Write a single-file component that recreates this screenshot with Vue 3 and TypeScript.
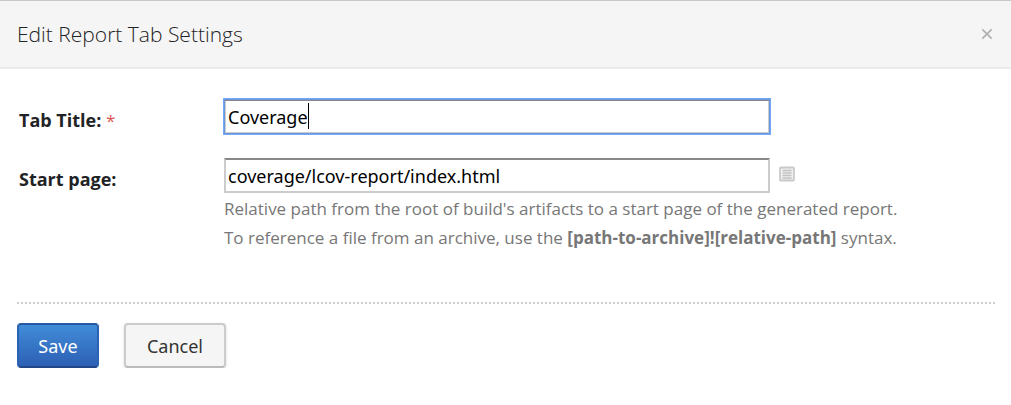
<script setup lang="ts">
import { ref } from 'vue'

const tabTitle = ref('Coverage')
const startPage = ref('coverage/lcov-report/index.html')
</script>

<template>
  <form class="dialog" @submit.prevent>
    <header class="header">
      <h1 class="title">Edit Report Tab Settings</h1>
      <button class="close" type="button" aria-label="Close">
        <svg width="12" height="12" viewBox="0 0 12 12">
          <path d="M1.3 1.3 10.7 10.7M10.7 1.3 1.3 10.7" fill="none" stroke="#b0b0b0" stroke-width="1.7" />
        </svg>
      </button>
    </header>

    <div class="fields">
      <label class="label" for="tab-title">Tab Title: <span class="required">*</span></label>
      <div class="control">
        <div class="box">
          <input id="tab-title" v-model="tabTitle" class="input active" type="text" />
          <i class="caret"></i>
        </div>
      </div>

      <label class="label" for="start-page">Start page:</label>
      <div class="control">
        <div class="row">
          <div class="box">
            <input id="start-page" v-model="startPage" class="input" type="text" />
          </div>
          <button class="picker" type="button" aria-label="Browse artifacts">
            <svg width="16" height="16" viewBox="0 0 16 16">
              <rect x="1" y="1.5" width="14" height="13" rx="1" fill="#efefef" stroke="#cacaca" stroke-width="1.8" />
              <path d="M3.5 4.5h9M3.5 7h9M3.5 9.5h9M3.5 12h9" stroke="#c2c2c2" stroke-width="1.3" />
            </svg>
          </button>
        </div>
        <p class="help">
          Relative path from the root of build's artifacts to a start page of the generated report.<br />
          To reference a file from an archive, use the <b>[path-to-archive]![relative-path]</b> syntax.
        </p>
      </div>
    </div>

    <footer class="footer">
      <button class="button save" type="submit">Save</button>
      <button class="button cancel" type="button">Cancel</button>
    </footer>
  </form>
</template>

<style>
body {
  margin: 0;
  background: #fff;
}
</style>

<style scoped>
.dialog {
  border-top: 1px solid #c8c8c8;
  color: #1f2326;
  font-family: "Open Sans", "Noto Sans", sans-serif;
  font-size: 18px;
}
.dialog * {
  box-sizing: border-box;
}
.header {
  display: flex;
  align-items: center;
  justify-content: space-between;
  height: 68px;
  padding: 0 18px 0 17px;
  border-bottom: 2px solid #ebebeb;
  background: #f5f5f5;
}
.title {
  margin: 0;
  font-size: 21px;
  font-weight: 300;
  line-height: 28px;
}
.close,
.picker {
  display: flex;
  padding: 0;
  border: 0;
  background: none;
}
.picker {
  margin-bottom: 3px;
}
.fields {
  display: grid;
  grid-template-columns: 205px minmax(0, 1fr);
  row-gap: 24px;
  padding: 30px 18px 0 19px;
}
.label {
  padding-top: 8px;
  font-weight: 700;
  line-height: 26px;
}
.required {
  color: #d9534f;
  font-size: 17px;
  font-weight: 400;
}
.row {
  display: flex;
  align-items: center;
  gap: 9px;
}
.box {
  position: relative;
  width: 100%;
  max-width: 546px;
}
.input {
  display: block;
  width: 100%;
  height: 35px;
  padding: 0 2px;
  border: 2px solid #ccc;
  border-top-color: #888;
  border-radius: 0;
  outline: none;
  background: #fff;
  color: #000;
  font-family: "Noto Sans", "Open Sans", sans-serif;
  font-size: 18px;
  line-height: 26px;
}
.active {
  border: 1px solid #6b97dc;
  box-shadow: 0 0 0 1px #74a6fa, inset 0 1px #888, inset 0 -1px #ccc, inset -1px 0 #ccc, inset 1px 0 #ccc;
  padding: 0 3px;
}
.caret {
  position: absolute;
  top: 4px;
  left: 84px;
  width: 1px;
  height: 26px;
  background: #000;
}
.help {
  margin: 1px 0 0;
  color: #777;
  font-size: 17px;
  line-height: 29px;
}
.footer {
  display: flex;
  gap: 25px;
  margin: 50px 16px 0 17px;
  padding-top: 19px;
  border-top: 2px dotted #ccc;
}
.button {
  height: 45px;
  padding: 0 19px;
  border: 2px solid;
  border-radius: 4px;
  font-family: "Noto Sans", "Open Sans", sans-serif;
  font-size: 18px;
}
.save {
  min-width: 82px;
  border-color: #2857a4 #2c62b2 #22468a;
  background: linear-gradient(#418cd8, #2d60b5);
  color: #fff;
}
.cancel {
  min-width: 102px;
  border-color: #ccc #ccc #bbb;
  background: #f5f5f5;
  box-shadow: 0 1px 3px rgba(0, 0, 0, 0.15);
  color: #333;
}
</style>
